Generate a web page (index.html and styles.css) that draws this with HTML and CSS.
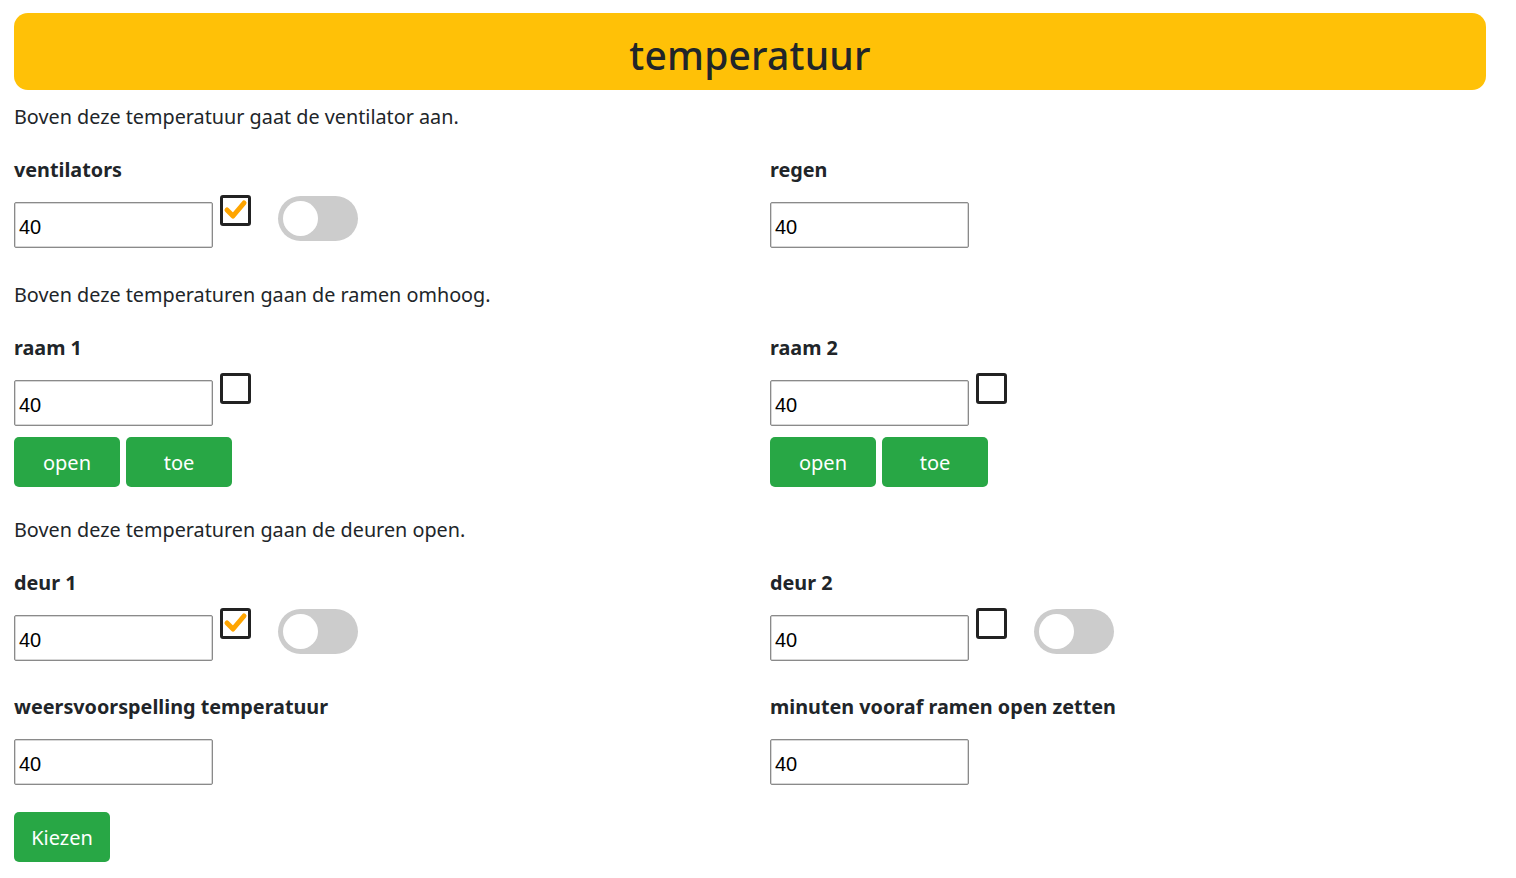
FILE: index.html
```html
<!DOCTYPE html>
<html lang="nl">
<head>
<meta charset="utf-8">
<title>temperatuur</title>
<link rel="stylesheet" href="styles.css">
</head>
<body>
<div class="page">
  <header class="banner"><h1>temperatuur</h1></header>

  <p class="intro first">Boven deze temperatuur gaat de ventilator aan.</p>
  <div class="grid sec-a">
    <div class="field">
      <label class="lbl">ventilators</label>
      <div class="row">
        <div class="inp">40</div>
        <span class="check"><svg viewBox="0 0 25 25" width="25" height="25"><path d="M4 12 L10 18 L21 5" fill="none" stroke="#ffa500" stroke-width="5" stroke-linecap="round" stroke-linejoin="round"/></svg></span>
        <span class="toggle"><span class="knob"></span></span>
      </div>
    </div>
    <div class="field">
      <label class="lbl">regen</label>
      <div class="row">
        <div class="inp">40</div>
      </div>
    </div>
  </div>

  <p class="intro">Boven deze temperaturen gaan de ramen omhoog.</p>
  <div class="grid sec-b">
    <div class="field">
      <label class="lbl">raam 1</label>
      <div class="row">
        <div class="inp">40</div>
        <span class="check"></span>
      </div>
      <div class="btns">
        <button class="btn wide">open</button>
        <button class="btn wide">toe</button>
      </div>
    </div>
    <div class="field">
      <label class="lbl">raam 2</label>
      <div class="row">
        <div class="inp">40</div>
        <span class="check"></span>
      </div>
      <div class="btns">
        <button class="btn wide">open</button>
        <button class="btn wide">toe</button>
      </div>
    </div>
  </div>

  <p class="intro">Boven deze temperaturen gaan de deuren open.</p>
  <div class="grid sec-c">
    <div class="field">
      <label class="lbl">deur 1</label>
      <div class="row">
        <div class="inp">40</div>
        <span class="check"><svg viewBox="0 0 25 25" width="25" height="25"><path d="M4 12 L10 18 L21 5" fill="none" stroke="#ffa500" stroke-width="5" stroke-linecap="round" stroke-linejoin="round"/></svg></span>
        <span class="toggle"><span class="knob"></span></span>
      </div>
    </div>
    <div class="field">
      <label class="lbl">deur 2</label>
      <div class="row">
        <div class="inp">40</div>
        <span class="check"></span>
        <span class="toggle"><span class="knob"></span></span>
      </div>
    </div>
  </div>

  <div class="grid sec-d">
    <div class="field">
      <label class="lbl">weersvoorspelling temperatuur</label>
      <div class="row">
        <div class="inp">40</div>
      </div>
    </div>
    <div class="field">
      <label class="lbl">minuten vooraf ramen open zetten</label>
      <div class="row">
        <div class="inp">40</div>
      </div>
    </div>
  </div>

  <button class="btn kiezen">Kiezen</button>
</div>
</body>
</html>
```

FILE: styles.css
```css
* { box-sizing: border-box; }
html, body { margin: 0; padding: 0; background: #fff; }
body {
  font-family: "Noto Sans", "Open Sans", sans-serif;
  font-size: 19.8px;
  line-height: 30px;
  color: #212529;
}
.page { padding: 13px 0 0 14px; width: 1486px; }
.banner {
  width: 1472px;
  height: 77px;
  background: #ffc107;
  border-radius: 14px;
  display: flex;
  align-items: center;
  justify-content: center;
}
.banner h1 {
  margin: 0;
  font-size: 39px;
  font-weight: 500;
  line-height: 48px;
  color: #212529;
  letter-spacing: 0.2px;
  padding-top: 6px;
}
.intro { margin: 0 0 23px 0; }
.intro.first { margin-top: 12px; }
.grid { display: grid; grid-template-columns: 756px 1fr; }
.sec-a { margin-bottom: 32px; }
.sec-b { margin-bottom: 28px; }
.sec-c { margin-bottom: 31px; }
.sec-d { margin-bottom: 27px; }
.field { display: flex; flex-direction: column; align-items: flex-start; }
.lbl { font-weight: 700; display: block; margin-bottom: 10px; }
.row { display: flex; align-items: flex-start; height: 53px; }
.inp {
  margin-top: 7px;
  width: 199px;
  height: 46px;
  border: 1px solid #8a8a8a;
  box-shadow: inset 0 0 0 0.5px #b0b0b0;
  border-radius: 2px;
  font-family: "Liberation Sans", Arial, sans-serif;
  font-size: 20px;
  line-height: 44px;
  padding: 2px 0 0 4px;
  color: #000;
}
.check {
  margin-left: 7px;
  width: 31px;
  height: 31px;
  border: 3px solid #222;
  border-radius: 3px;
  display: flex;
  align-items: center;
  justify-content: center;
  background: #fff;
}
.check svg { display: block; }
.toggle {
  margin-left: 27px;
  margin-top: 1px;
  width: 80px;
  height: 45px;
  border-radius: 23px;
  background: #cccccc;
  padding: 5px;
  display: flex;
}
.knob {
  width: 35px;
  height: 35px;
  border-radius: 50%;
  background: #fff;
}
.btns { display: flex; gap: 6px; margin-top: 11px; }
.btn {
  background: #28a745;
  color: #fff;
  border: none;
  border-radius: 5px;
  height: 50px;
  font-family: "Noto Sans", "Open Sans", sans-serif;
  font-size: 20px;
  padding: 0;
  display: flex;
  align-items: center;
  justify-content: center;
}
.btn.wide { width: 106px; }
.kiezen { width: 96px; }
```
